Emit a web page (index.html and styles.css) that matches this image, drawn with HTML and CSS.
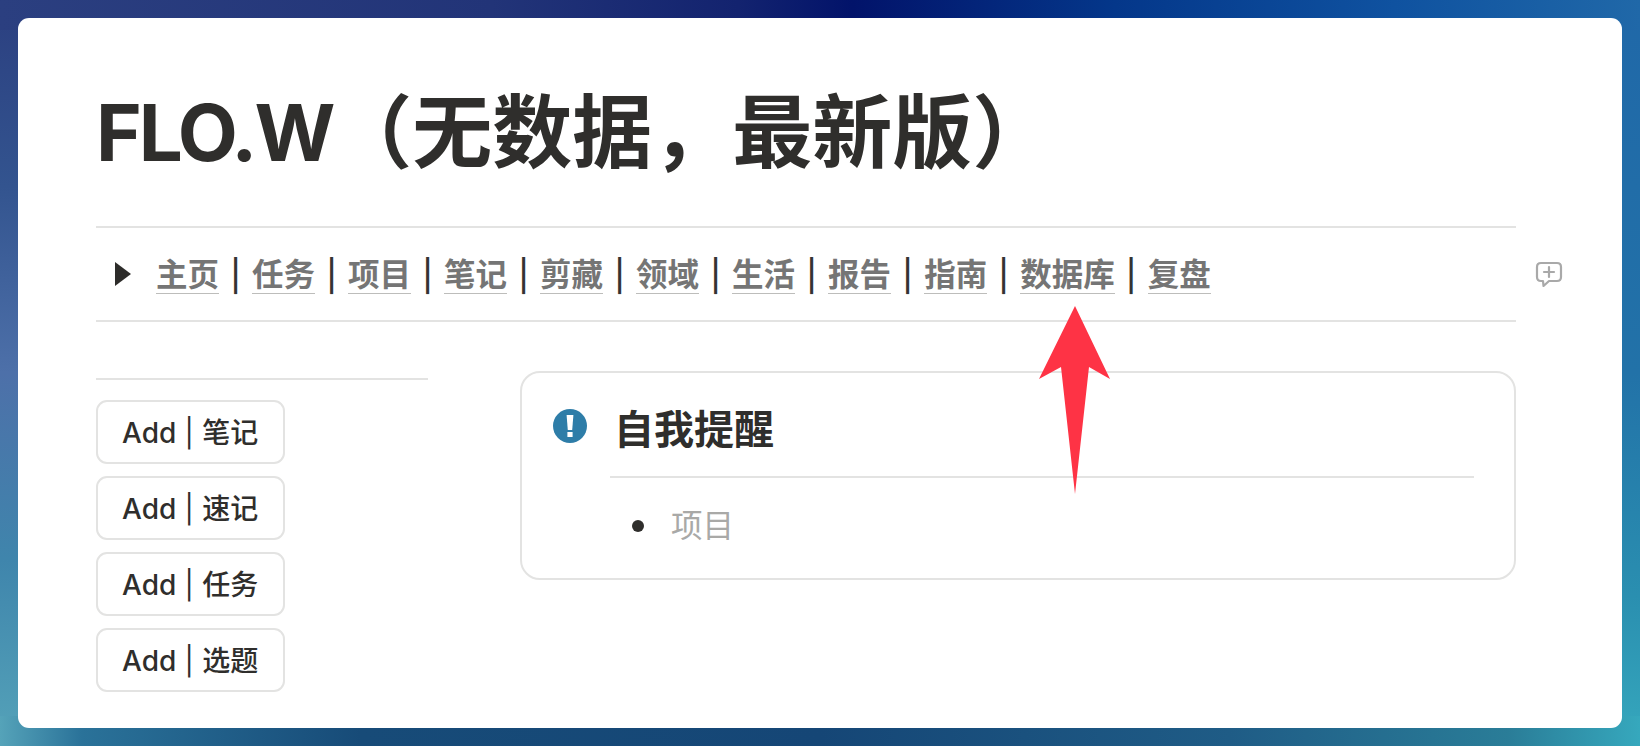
FILE: index.html
```html
<!DOCTYPE html>
<html lang="zh-CN">
<head>
<meta charset="utf-8">
<title>FLO.W</title>
<link rel="stylesheet" href="styles.css">
</head>
<body>
<main class="window">
  <h1 class="title"><span class="title-latin">FLO.W</span>（无数据，最新版）</h1>
  <hr class="rule">
  <div class="toggle-row">
    <svg class="caret" viewBox="0 0 18 26" width="18" height="26"><path d="M1 1 L17 13 L1 25 Z" fill="#2d2c2a"/></svg>
    <nav class="links">
      <a class="link">主页</a><span class="sep">|</span>
      <a class="link">任务</a><span class="sep">|</span>
      <a class="link">项目</a><span class="sep">|</span>
      <a class="link">笔记</a><span class="sep">|</span>
      <a class="link">剪藏</a><span class="sep">|</span>
      <a class="link">领域</a><span class="sep">|</span>
      <a class="link">生活</a><span class="sep">|</span>
      <a class="link">报告</a><span class="sep">|</span>
      <a class="link">指南</a><span class="sep">|</span>
      <a class="link">数据库</a><span class="sep">|</span>
      <a class="link">复盘</a>
    </nav>
    <svg class="comment" viewBox="0 0 28 26" width="28" height="26" fill="none" stroke="#a9a9a9" stroke-width="2.2" stroke-linejoin="round" stroke-linecap="round"><path d="M6 2 H22 Q26 2 26 6 V16 Q26 20 22 20 H14 L8.5 25 L8 20 H6 Q2 20 2 16 V6 Q2 2 6 2 Z"/><path d="M14 6 V16 M9 11 H19"/></svg>
  </div>
  <hr class="rule">
  <div class="columns">
    <aside class="side">
      <hr class="rule">
      <div class="buttons">
        <button class="btn">Add<span class="btn-bar">|</span>笔记</button>
        <button class="btn">Add<span class="btn-bar">|</span>速记</button>
        <button class="btn">Add<span class="btn-bar">|</span>任务</button>
        <button class="btn">Add<span class="btn-bar">|</span>选题</button>
      </div>
    </aside>
    <section class="callout">
      <svg class="alert" viewBox="0 0 34 34" width="34" height="34"><circle cx="17" cy="17" r="17" fill="#2e7da8"/><path d="M13.6 6 H20.4 L19.2 21 H14.8 Z" fill="#fff"/><rect x="14.4" y="23" width="5.2" height="5" fill="#fff"/></svg>
      <div class="callout-body">
        <h2 class="callout-title">自我提醒</h2>
        <hr class="rule">
        <ul class="items">
          <li class="item">项目</li>
        </ul>
      </div>
    </section>
  </div>
  <svg class="arrow" viewBox="0 0 71 188" width="71" height="188"><path d="M36 0 L71 73 L50 61 L36 188 L22 61 L0 73 Z" fill="#fe3345"/></svg>
</main>
</body>
</html>
```
FILE: styles.css
```css
* { box-sizing: border-box; }
html, body { margin: 0; height: 100%; }
body {
  padding: 18px;
  font-family: Inter, "Noto Sans CJK SC", sans-serif;
  color: #2f2e2c;
  overflow: hidden;
  background-color: #1b5a8c;
  background-repeat: no-repeat;
  background-image:
    linear-gradient(to right, #2b3f80 0%, #223478 30%, #13236f 45%, #02136a 52%, #04378a 68%, #0f52a0 85%, #2068a8 100%),
    linear-gradient(to right, #55a3b9 0%, #2a7299 5%, #174b78 22%, #154676 50%, #1f5c86 75%, #2a7d98 92%, #36a8bd 100%),
    linear-gradient(to bottom, #2b3f80 0%, #33548f 25%, #4d70a9 50%, #3f85ac 75%, #55a3b9 100%),
    linear-gradient(to bottom, #2068a8 0%, #2272a8 50%, #2a8fb0 80%, #36a8bd 100%);
  background-size: 100% 30px, 100% 30px, 30px 100%, 30px 100%;
  background-position: top left, bottom left, top left, top right;
}
.window {
  position: relative;
  height: 710px;
  padding: 54px 106px 0 78px;
  background: #fff;
  border-radius: 11px;
}
.title {
  margin: 0;
  height: 154px;
  padding-top: 13px;
  font-size: 80px;
  line-height: 94px;
  font-weight: 700;
  white-space: nowrap;
}
.title-latin {
  font-size: 78px;
  letter-spacing: -3px;
}
.rule {
  margin: 0;
  height: 2px;
  border: 0;
  background: #e3e3e2;
}
.toggle-row {
  position: relative;
  display: flex;
  align-items: center;
  height: 92px;
  padding-left: 18px;
}
.caret { flex: none; margin-right: 24px; margin-top: -1px; }
.links { display: flex; align-items: center; white-space: nowrap; margin-top: 3px; }
.link {
  font-size: 31.5px;
  line-height: 36px;
  font-weight: 700;
  color: #757575;
  border-bottom: 1.5px solid #bdbdbb;
}
.sep {
  width: 33px;
  text-align: center;
  font-size: 31px;
  font-weight: 500;
  color: #333;
}
.comment { position: absolute; right: -47px; top: 33px; }
.columns {
  display: flex;
  gap: 92px;
  margin-top: 49px;
}
.side { flex: none; width: 332px; padding-top: 7px; }
.buttons {
  display: flex;
  flex-direction: column;
  gap: 12px;
  margin-top: 20px;
}
.btn {
  width: 189px;
  height: 64px;
  padding: 0 0 3px 24px;
  text-align: left;
  font-family: Inter, "Noto Sans CJK SC", sans-serif;
  font-size: 28px;
  font-weight: 500;
  color: #2f2e2c;
  background: #fff;
  border: 2px solid #e3e3e2;
  border-radius: 11px;
  white-space: nowrap;
}
.btn-bar {
  display: inline-block;
  width: 26px;
  text-align: center;
  font-weight: 400;
}
.callout {
  flex: 1;
  display: flex;
  height: 209px;
  padding: 36px 40px 0 31px;
  border: 2px solid #e3e3e2;
  border-radius: 20px;
}
.alert { flex: none; margin-right: 23px; }
.callout-body { flex: 1; min-width: 0; }
.callout-title {
  margin: -2px 0 0 4px;
  height: 69px;
  font-size: 40px;
  line-height: 46px;
  font-weight: 700;
}
.items {
  list-style: none;
  margin: 0;
  padding: 25px 0 0 22px;
  font-size: 31.5px;
  line-height: 46px;
}
.item {
  display: flex;
  align-items: center;
  gap: 27px;
  color: #a9a9a7;
}
.item::before {
  content: "";
  width: 12px;
  height: 12px;
  border-radius: 50%;
  background: #2f2e2c;
}
.arrow { position: absolute; left: 1021px; top: 288px; }
```
